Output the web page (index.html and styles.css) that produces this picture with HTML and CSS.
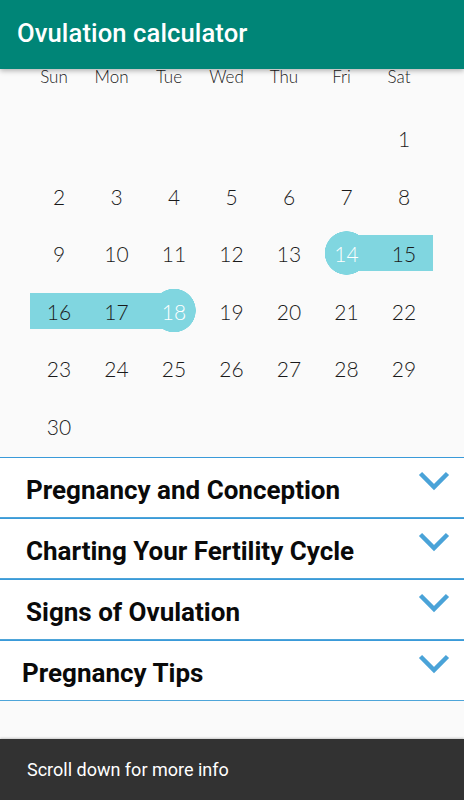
FILE: index.html
```html
<!DOCTYPE html>
<html>
<head>
<meta charset="utf-8">
<link rel="stylesheet" href="styles.css">
</head>
<body>
<div class="screen">
  <header class="appbar"><h1 class="title">Ovulation calculator</h1></header>
  <main class="content">
    <section class="calendar">
      <div class="weekdays">
        <span>Sun</span><span>Mon</span><span>Tue</span><span>Wed</span><span>Thu</span><span>Fri</span><span>Sat</span>
      </div>
      <div class="days">
        <span></span><span></span><span></span><span></span><span></span><span></span><span class="day">1</span>
        <span class="day">2</span><span class="day">3</span><span class="day">4</span><span class="day">5</span><span class="day">6</span><span class="day">7</span><span class="day">8</span>
        <span class="day">9</span><span class="day">10</span><span class="day">11</span><span class="day">12</span><span class="day">13</span><span class="day sel start">14</span><span class="day sel mid">15</span>
        <span class="day sel mid">16</span><span class="day sel mid">17</span><span class="day sel end">18</span><span class="day">19</span><span class="day">20</span><span class="day">21</span><span class="day">22</span>
        <span class="day">23</span><span class="day">24</span><span class="day">25</span><span class="day">26</span><span class="day">27</span><span class="day">28</span><span class="day">29</span>
        <span class="day">30</span>
      </div>
    </section>
    <section class="accordion">
      <div class="item"><span class="item-title">Pregnancy and Conception</span><svg class="chev" viewBox="0 0 32 20"><path d="M2.5 2.5 L16 16 L29.5 2.5" /></svg></div>
      <div class="item"><span class="item-title">Charting Your Fertility Cycle</span><svg class="chev" viewBox="0 0 32 20"><path d="M2.5 2.5 L16 16 L29.5 2.5" /></svg></div>
      <div class="item"><span class="item-title">Signs of Ovulation</span><svg class="chev" viewBox="0 0 32 20"><path d="M2.5 2.5 L16 16 L29.5 2.5" /></svg></div>
      <div class="item tips"><span class="item-title">Pregnancy Tips</span><svg class="chev" viewBox="0 0 32 20"><path d="M2.5 2.5 L16 16 L29.5 2.5" /></svg></div>
    </section>
  </main>
  <footer class="snackbar">Scroll down for more info</footer>
</div>
</body>
</html>
```
FILE: styles.css
```css
* { box-sizing: border-box; }
html, body { margin: 0; padding: 0; }
body { background: #fafafa; font-family: Roboto, "Liberation Sans", sans-serif; }
.screen { width: 464px; height: 800px; display: flex; flex-direction: column; overflow: hidden; }
.appbar {
  height: 69px; flex: none; background: #008577; display: flex; align-items: center;
  padding-left: 17px; box-shadow: 0 2px 5px rgba(0,0,0,0.28); position: relative; z-index: 2;
}
.title { margin: 0; color: #fff; font-weight: 500; font-size: 25.6px; letter-spacing: 0.1px; padding-bottom: 3px; }
.content { flex: 1; display: flex; flex-direction: column; background: #fafafa; }
.calendar { font-family: Lato, "Open Sans", sans-serif; font-weight: 300; color: #1a1a1a; }
.weekdays { display: grid; grid-template-columns: 58px 57px 58px 57px 58px 57px 58px; margin-left: 25px; height: 17px; margin-top: -1px; }
.weekdays span { text-align: center; font-size: 17px; line-height: 17px; }
.days {
  display: grid; grid-template-columns: 58px 57px 58px 57px 58px 57px 58px;
  grid-template-rows: 58px 57px 58px 57px 58px 57px; margin-left: 30px; margin-top: 24px;
}
.day { display: flex; align-items: center; justify-content: center; font-size: 21px; padding-top: 1px; }
.sel { background-repeat: no-repeat; background-position: center; }
.mid { background-image: linear-gradient(#80d6e0, #80d6e0); background-size: 100% 36px; }
.start, .end { color: #fff; }
.start {
  background-image: radial-gradient(circle 22px at center, #80d6e0 21.5px, rgba(128,214,224,0) 22px),
    linear-gradient(to right, rgba(128,214,224,0) 50%, #80d6e0 50%);
  background-size: 100% 100%, 100% 36px;
}
.end {
  background-image: radial-gradient(circle 22px at center, #80d6e0 21.5px, rgba(128,214,224,0) 22px),
    linear-gradient(to right, #80d6e0 50%, rgba(128,214,224,0) 50%);
  background-size: 100% 100%, 100% 36px;
}
.accordion { margin-top: 3px; }
.item {
  height: 61px; background: #fff; border-top: 1px solid #3a9ad9; border-bottom: 1px solid #4ea5d9;
  display: flex; align-items: flex-start; justify-content: space-between; padding: 0 14px 0 26px;
}
.item-title { font-weight: 700; font-size: 26px; color: #0a0a0a; margin-top: 17px; }
.tips { padding-left: 22px; }
.chev { width: 32px; height: 20px; margin-top: 13px; flex: none; }
.chev path { fill: none; stroke: #4aa3d8; stroke-width: 4.5; stroke-linecap: butt; stroke-linejoin: miter; }
.snackbar {
  flex: none; height: 61px; background: #323232; color: #fff; font-size: 18px;
  display: flex; align-items: center; padding-left: 27px; box-shadow: 0 -1px 2px rgba(0,0,0,0.2);
}
```
